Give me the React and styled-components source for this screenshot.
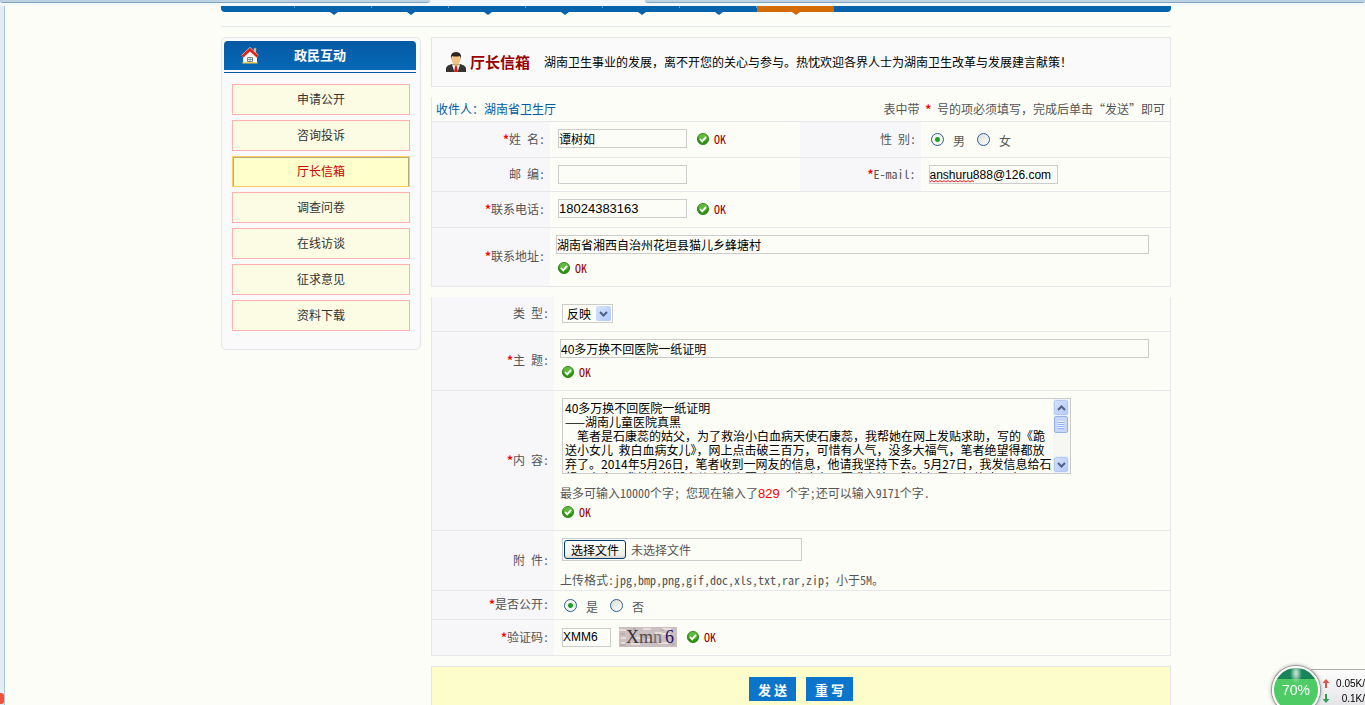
import React, { useRef, useState } from 'react';
import styled, { createGlobalStyle } from 'styled-components';

const menu = [
	'申请公开',
	'咨询投诉',
	'厅长信箱',
	'调查问卷',
	'在线访谈',
	'征求意见',
	'资料下载',
];

const navItems = [
	{ id: 'home', first: true },
	{ id: 'news', arrow: true },
	{ id: 'open', arrow: true },
	{ id: 'service', arrow: true },
	{ id: 'health', arrow: true },
	{ id: 'policy', arrow: true },
	{ id: 'special', arrow: true },
	{ id: 'mailbox', arrow: true, current: true },
];

const letter = [
	'40多万换不回医院一纸证明',
	'——湖南儿童医院真黑',
	'　笔者是石康蕊的姑父，为了救治小白血病天使石康蕊，我帮她在网上发贴求助，写的《跪',
	'送小女儿  救白血病女儿》，网上点击破三百万，可惜有人气，没多大福气，笔者绝望得都放',
	'弃了。2014年5月26日，笔者收到一网友的信息，他请我坚持下去。5月27日，我发信息给石',
	'超已有多，我转告他湖南儿童的主要陪同医生也在，要求主治医院的领导回复他才同意',
].join('\n');

const HouseIcon = () => (
	<svg width='18' height='18' viewBox='0 0 18 18' aria-hidden='true'>
		<path d='M13 1h2v5h-2z' fill='#e8e0d8' stroke='#8a6a5a' strokeWidth='.6' />
		<path d='M2 9l7-6 7 6v7H2z' fill='#fff' />
		<path d='M1.500 15h15v1.500h-15z' fill='#f5cf5a' />
		<path d='M6.500 10.500h5v4h-5z' fill='#eef4fb' stroke='#68788c' strokeWidth='.9' />
		<path d='M9 10.500v4M6.500 12.500h5' stroke='#68788c' strokeWidth='.7' />
		<path d='M1.500 9.500L9 2.500l7.500 7' fill='none' stroke='#f6c9c0' strokeWidth='3.600' />
		<path d='M1.500 9.500L9 2.500l7.500 7' fill='none' stroke='#dd1f14' strokeWidth='2.400' />
	</svg>
);

const PersonIcon = () => (
	<svg width='20' height='21' viewBox='0 0 20 21' aria-hidden='true'>
		<path d='M0 20v-4q1-3 6-4h8q5 1 6 4v4z' fill='#333' />
		<path d='M6 12.500L8.500 20h3L14 12.500z' fill='#fff' />
		<path d='M9 14h2l1 6H8z' fill='#d3201c' />
		<path d='M7.500 10h5v3L10 14.500 7.500 13z' fill='#d99a55' />
		<ellipse cx='10' cy='7' rx='4.500' ry='5.500' fill='#f2c084' />
		<path d='M5 7Q4 0 10 0t5 7l-1-3q-4 1-8 0z' fill='#2c221b' />
	</svg>
);

const OkIcon = () => (
	<svg width='12' height='12' viewBox='0 0 12 12' aria-hidden='true'>
		<circle cx='6' cy='6' r='5.600' fill='#2f9412' stroke='#24790e' strokeWidth='.8' />
		<ellipse cx='6' cy='4.500' rx='4.500' ry='3.500' fill='#62b93f' />
		<path d='M3 6l2.200 2.400L9 3.900' fill='none' stroke='#fff' strokeWidth='1.800' />
	</svg>
);

const Chevron = ({ up }) => (
	<svg width='9' height='6' viewBox='0 0 9 6' aria-hidden='true'>
		<path
			d={up ? 'M1 5l3.500-3.500L8 5' : 'M1 1l3.500 3.500L8 1'}
			fill='none'
			stroke='#4d6185'
			strokeWidth='2'
		/>
	</svg>
);

const Squiggle = () => (
	<SpellMark width='45' height='3' viewBox='0 0 45 3' aria-hidden='true'>
		<path
			d='M0 2l2-1.500 2 1.500 2-1.500 2 1.500 2-1.500 2 1.500 2-1.500 2 1.500 2-1.500 2 1.500 2-1.500 2 1.500 2-1.500 2 1.500 2-1.500 2 1.500 2-1.500 2 1.500 2-1.500 2 1.500 2-1.500 2 1.500'
			fill='none'
			stroke='#f00'
			strokeWidth='.9'
		/>
	</SpellMark>
);

const CaptchaImage = () => (
	<svg width='58' height='20' viewBox='0 0 58 20' role='img' aria-label='Xmn6'>
		<rect width='58' height='20' fill='#cbbfc2' />
		<path
			d='M0 3h7m5 14h9m3-15h8m4 4h7m-26 5h6m16 5h10m-47-5h5m36-9h9m-50 14h4m20-3h5m12-6h8'
			stroke='#e6dfd8'
			strokeWidth='2'
		/>
		<path
			d='M2 7h4m8-5h3m14 13h6m5-12h3m6 14h5M1 18h6m15-8h5m13 3h3'
			stroke='#a99ba6'
			strokeWidth='1'
		/>
		<text x='7' y='16' fontFamily='Liberation Serif, serif' fontSize='18' fill='#333'>
			X
			<tspan fill='#554a4a'>m</tspan>
			<tspan fill='#77706f'>n</tspan>
		</text>
		<text x='46' y='16' fontFamily='Liberation Serif, serif' fontSize='18' fill='#1b1464'>
			6
		</text>
	</svg>
);

const Ok = () => (
	<OkMark>
		<OkIcon />
		OK
	</OkMark>
);

const Caption = ({ text, required, htmlFor, second }) => (
	<LabelCell $second={second}>
		<label htmlFor={htmlFor}>
			{required && <Star>*</Star>}
			{text}:
		</label>
	</LabelCell>
);

const App = () => {
	const fileRef = useRef(null);
	const [fileName, setFileName] = useState('未选择文件');

	return (
		<Shell>
			<GlobalStyle />
			<TabStrip>
				<BrowserTab $w='430px' />
				<BrowserTab $w='215px' $active />
				<BrowserTab />
			</TabStrip>
			<Frame>
				<LeftEdge>
					<EdgeMark />
				</LeftEdge>
				<Page>
					<Container>
						<Nav>
							{navItems.map((item) => (
								<NavItem
									key={item.id}
									$first={item.first}
									$arrow={item.arrow}
									$current={item.current}
								/>
							))}
						</Nav>
						<Divider />
						<Columns>
							<Sidebar>
								<SideTitle>
									<HouseIcon />
									<h2>政民互动</h2>
								</SideTitle>
								<SideMenu>
									{menu.map((name) => (
										<SideLink
											key={name}
											href='#'
											$current={name === '厅长信箱'}>
											{name}
										</SideLink>
									))}
								</SideMenu>
							</Sidebar>

							<Main>
								<TitleBox>
									<PersonIcon />
									<h1>厅长信箱</h1>
									<p>
										湖南卫生事业的发展，离不开您的关心与参与。热忱欢迎各界人士为湖南卫生改革与发展建言献策！
									</p>
								</TitleBox>

								<FormTable>
									<Recipient>
										<span>收件人：湖南省卫生厅</span>
										<Hint>
											表中带 <Star>*</Star> 号的项必须填写，完成后单击“发送”即可
										</Hint>
									</Recipient>
									<Row $h='36px'>
										<Caption text='姓 名' required htmlFor='name' />
										<Cell>
											<TextInput id='name' defaultValue='谭树如' />
											<Ok />
										</Cell>
										<Caption text='性 别' htmlFor='male' second />
										<RadioCell>
											<Radio id='male' name='sex' defaultChecked />
											<label htmlFor='male'>男</label>
											<Radio id='female' name='sex' />
											<label htmlFor='female'>女</label>
										</RadioCell>
									</Row>
									<Row $h='34px'>
										<Caption text='邮 编' htmlFor='zip' />
										<Cell>
											<TextInput id='zip' />
										</Cell>
										<Caption text='E-mail' required htmlFor='email' second />
										<Cell>
											<InputWrap>
												<TextInput id='email' defaultValue='anshuru888@126.com' />
												<Squiggle />
											</InputWrap>
										</Cell>
									</Row>
									<Row $h='36px'>
										<Caption text='联系电话' required htmlFor='phone' />
										<Cell>
											<TextInput id='phone' $size='13px' defaultValue='18024383163' />
											<Ok />
										</Cell>
									</Row>
									<Row $h='59px'>
										<Caption text='联系地址' required htmlFor='address' />
										<StackCell>
											<TextInput
												id='address'
												$wide
												defaultValue='湖南省湘西自治州花垣县猫儿乡蜂塘村'
											/>
											<Ok />
										</StackCell>
									</Row>
								</FormTable>

								<FormTable $wideLabel>
									<Row $h='35px'>
										<Caption text='类 型' htmlFor='kind' />
										<Cell>
											<SelectBox>
												<select id='kind' defaultValue='反映'>
													<option>反映</option>
												</select>
												<SelectArrow>
													<Chevron />
												</SelectArrow>
											</SelectBox>
										</Cell>
									</Row>
									<Row $h='59px'>
										<Caption text='主 题' required htmlFor='subject' />
										<StackCell>
											<TextInput
												id='subject'
												$wide
												defaultValue='40多万换不回医院一纸证明'
											/>
											<Ok />
										</StackCell>
									</Row>
									<Row $h='140px'>
										<Caption text='内 容' required htmlFor='content' />
										<StackCell>
											<TextFrame>
												<textarea id='content' wrap='off' defaultValue={letter} />
												<ScrollBar>
													<ScrollButton type='button' aria-label='向上'>
														<Chevron up />
													</ScrollButton>
													<ScrollThumb />
													<ScrollButton type='button' aria-label='向下'>
														<Chevron />
													</ScrollButton>
												</ScrollBar>
											</TextFrame>
											<Note>
												最多可输入10000个字; 您现在输入了<Count>829</Count> 个字;还可以输入9171个字.
											</Note>
											<Ok />
										</StackCell>
									</Row>
									<Row $h='60px'>
										<Caption text='附 件' htmlFor='file' />
										<StackCell>
											<FileBox>
												<input
													id='file'
													type='file'
													ref={fileRef}
													onChange={(e) =>
														setFileName(e.target.files[0]?.name || '未选择文件')
													}
												/>
												<button type='button' onClick={() => fileRef.current.click()}>
													选择文件
												</button>
												<span>{fileName}</span>
											</FileBox>
											<Note>
												上传格式:jpg,bmp,png,gif,doc,xls,txt,rar,zip；小于5M。
											</Note>
										</StackCell>
									</Row>
									<Row $h='29px'>
										<Caption text='是否公开' required htmlFor='yes' />
										<RadioCell>
											<Radio id='yes' name='public' defaultChecked />
											<label htmlFor='yes'>是</label>
											<Radio id='no' name='public' />
											<label htmlFor='no'>否</label>
										</RadioCell>
									</Row>
									<Row $h='36px'>
										<Caption text='验证码' required htmlFor='code' />
										<Cell>
											<CodeInput id='code' defaultValue='XMM6' />
											<CaptchaImage />
											<Ok />
										</Cell>
									</Row>
								</FormTable>

								<Actions>
									<ActionButton type='button'>发 送</ActionButton>
									<ActionButton type='button'>重 写</ActionButton>
								</Actions>
							</Main>
						</Columns>
					</Container>
				</Page>
			</Frame>
			<SpeedWidget>
				<SpeedBall>70%</SpeedBall>
				<SpeedPanel>
					<span>
						<svg width='8' height='9' viewBox='0 0 8 9' aria-hidden='true'>
							<path d='M4 0l3.500 4H5v5H3V4H.5z' fill='#e2533f' />
						</svg>
						0.05K/
					</span>
					<span>
						<svg width='8' height='9' viewBox='0 0 8 9' aria-hidden='true'>
							<path d='M4 9l3.500-4H5V0H3v5H.5z' fill='#2f9e57' />
						</svg>
						0.1K/
					</span>
				</SpeedPanel>
			</SpeedWidget>
		</Shell>
	);
};

const GlobalStyle = createGlobalStyle`
	* {
		box-sizing: border-box;
	}

	body {
		margin: 0;
		background: #fcfdf7;
		color: #555;
		font-family: 'Noto Sans CJK SC', sans-serif;
		font-size: 12px;
		line-height: 18px;
		font-feature-settings: 'hwid';
	}

	h1, h2, p {
		margin: 0;
	}

	svg {
		display: block;
		flex: none;
	}
`;

const Shell = styled.div`
	display: flex;
	flex-direction: column;
	height: 100vh;
	overflow: hidden;
`;

const TabStrip = styled.div`
	display: flex;
	flex: none;
	height: 6px;
	border-bottom: 3px solid #f3f8fb;
	background: #f3f8fb;
`;

const BrowserTab = styled.div`
	flex: ${(p) => (p.$w ? `0 0 ${p.$w}` : 1)};
	border-bottom: ${(p) => (p.$active ? 'none' : '1px solid #7fa5c5')};
	border-radius: 0 0 4px 4px;
	background: ${(p) => (p.$active ? '#f1f6fa' : '#bdd3e4')};
`;

const Frame = styled.div`
	display: flex;
	flex: 1;
	min-height: 0;
`;

const LeftEdge = styled.div`
	display: flex;
	flex: none;
	align-items: flex-end;
	width: 5px;
	padding-bottom: 1px;
	border-right: 1px solid #a9c6da;
	background: #e4edf3;
`;

const EdgeMark = styled.div`
	width: 4px;
	height: 11px;
	border-radius: 0 3px 3px 0;
	background: #f4503c;
`;

const Page = styled.div`
	flex: 1;
	padding-left: 22px;
`;

const Container = styled.div`
	max-width: 950px;
	margin: 0 auto;
`;

const Nav = styled.nav`
	display: flex;
	height: 6px;
	border-radius: 0 0 4px 4px;
	background: #0563ac;
`;

const NavItem = styled.div`
	position: relative;
	width: ${(p) => (p.$first ? '74px' : '77px')};
	background: ${(p) =>
		p.$current
			? '#d46b05'
			: 'linear-gradient(#5fa3d6, #5fa3d6) right top / 1px 2px no-repeat'};

	&::after {
		content: '';
		display: ${(p) => (p.$arrow ? 'block' : 'none')};
		position: absolute;
		top: 100%;
		left: 35px;
		border: 4px solid transparent;
		border-top: 3px solid ${(p) => (p.$current ? '#d46b05' : '#0563ac')};
		border-bottom: 0;
	}
`;

const Divider = styled.div`
	margin-top: 14px;
	border-bottom: 1px solid #dfe9ee;
`;

const Columns = styled.div`
	display: flex;
	align-items: flex-start;
	gap: 10px;
	margin-top: 10px;
`;

const Sidebar = styled.aside`
	flex: none;
	width: 200px;
	padding: 3px 4px 18px 2px;
	border: 1px solid #e3e5ea;
	border-radius: 5px;
	background: #fafafb;
`;

const SideTitle = styled.div`
	position: relative;
	display: flex;
	align-items: center;
	justify-content: center;
	height: 29px;
	border-radius: 4px 4px 0 0;
	background: linear-gradient(#0559a3, #0669b6);

	svg {
		position: absolute;
		left: 17px;
	}

	h2 {
		color: #fff;
		font-size: 13px;
		line-height: 16px;
		padding-bottom: 2px;
	}
`;

const SideMenu = styled.nav`
	display: flex;
	flex-direction: column;
	gap: 5px;
	margin-top: 2px;
	padding: 11px 6px 0 8px;
	border-top: 1px solid #0559a3;
`;

const SideLink = styled.a`
	height: 31px;
	border: 1px solid ${(p) => (p.$current ? '#fc6' : '#ffb0b0')};
	background: ${(p) => (p.$current ? '#ffffcb' : '#fcfbe4')};
	box-shadow: ${(p) =>
		p.$current ? 'inset 1px 1px #b5ae85, inset -1px 0 #b5ae85' : 'none'};
	color: ${(p) => (p.$current ? '#c00' : '#333')};
	line-height: 27px;
	text-align: center;
	text-decoration: none;
`;

const Main = styled.main`
	display: flex;
	flex: 1;
	flex-direction: column;
	gap: 10px;
	min-width: 0;
`;

const TitleBox = styled.header`
	display: flex;
	align-items: center;
	height: 50px;
	padding-left: 14px;
	border: 1px solid #e5e5e9;
	background: #fafafa;

	h1 {
		margin: 0 14px 0 4px;
		color: #900;
		font-size: 15px;
	}

	p {
		color: #000;
		font-feature-settings: normal;
	}
`;

const FormTable = styled.section`
	--label: ${(p) => (p.$wideLabel ? '122px' : '118px')};
	border: solid #e3e9ee;
	border-width: 0 1px;
`;

const Recipient = styled.div`
	display: flex;
	justify-content: space-between;
	height: 25px;
	padding: 0 5px 0 4px;
	border-bottom: 1px solid #e8e8ec;
	color: #0059a3;
	font-feature-settings: normal;
	line-height: 24px;
`;

const Star = styled.span`
	color: #f00;
	font-weight: bold;
`;

const Hint = styled.span`
	color: #555;

	${Star} {
		margin: 0 3px;
	}
`;

const Row = styled.div`
	display: flex;
	height: ${(p) => p.$h};
	border-bottom: 1px solid #e8e8ec;
`;

const LabelCell = styled.div`
	display: flex;
	flex: none;
	align-items: center;
	justify-content: flex-end;
	width: ${(p) => (p.$second ? '121px' : 'var(--label)')};
	padding: 0 5px 2px 0;
	background: #f7f7fa;
`;

const Cell = styled.div`
	display: flex;
	flex: 1;
	align-items: center;
	align-self: flex-start;
	gap: 8px;
	padding: 7px 0 0 8px;
`;

const StackCell = styled.div`
	display: flex;
	flex: 1;
	flex-direction: column;
	align-items: flex-start;
	padding: 7px 21px 0 6px;

	> span {
		margin: 5px 0 0 2px;
	}

	> p + span {
		margin-top: 1px;
	}
`;

const RadioCell = styled.div`
	display: flex;
	flex: 0 0 249px;
	align-items: center;
	padding-left: 10px;

	label {
		margin: 3px 12px 0 9px;
	}
`;

const Radio = styled.input.attrs({ type: 'radio' })`
	appearance: none;
	width: 13px;
	height: 13px;
	margin: 0;
	border: 1px solid #2b5f94;
	border-radius: 50%;
	background: linear-gradient(135deg, #dcdcd6, #fff);

	&:checked {
		background: radial-gradient(circle, #21a121 0 2px, #f4f6f2 3px);
	}
`;

const OkMark = styled.span`
	display: flex;
	align-items: center;
	gap: 5px;
	margin-left: 2px;
	color: #900;
`;

const TextInput = styled.input`
	width: ${(p) => (p.$wide ? '100%' : '129px')};
	height: 19px;
	padding: 0;
	border: 1px solid #ccc;
	background: transparent;
	color: #000;
	font-family: 'Liberation Sans', 'Noto Sans CJK SC', sans-serif;
	font-size: ${(p) => p.$size || '12px'};
`;

const CodeInput = styled(TextInput)`
	width: 49px;
`;

const InputWrap = styled.div`
	position: relative;
	display: flex;
`;

const SpellMark = styled.svg`
	position: absolute;
	bottom: 1px;
	left: 1px;
`;

const SelectBox = styled.div`
	position: relative;
	display: flex;

	select {
		appearance: none;
		width: 51px;
		height: 19px;
		padding: 0 0 0 4px;
		border: 1px solid #ccc;
		border-radius: 0;
		background: transparent;
		color: #000;
		font-family: inherit;
		font-size: 12px;
		line-height: 17px;
	}
`;

const SelectArrow = styled.span`
	position: absolute;
	top: 2px;
	right: 2px;
	display: grid;
	place-items: center;
	width: 15px;
	height: 15px;
	border-radius: 2px;
	background: linear-gradient(135deg, #d5e2fd, #b2c9f8);
	pointer-events: none;
`;

const TextFrame = styled.div`
	display: flex;
	width: 509px;
	height: 76px;
	margin-left: 2px;
	border: 1px solid #ccc;

	textarea {
		flex: 1;
		min-width: 0;
		height: 74px;
		padding: 2px 0 0 2px;
		border: 0;
		outline: 0;
		background: transparent;
		color: #000;
		font-family: 'Noto Sans CJK SC', sans-serif;
		font-size: 12px;
		line-height: 14px;
		overflow: hidden;
		resize: none;
	}
`;

const ScrollBar = styled.div`
	display: flex;
	flex: none;
	flex-direction: column;
	width: 17px;
	background: #f6f6f2;
`;

const ScrollButton = styled.button`
	display: grid;
	place-items: center;
	width: 16px;
	height: 17px;
	padding: 0;
	border: 1px solid #e8f0ff;
	border-radius: 3px;
	background: linear-gradient(135deg, #d5e2fd, #b2c9f8);
	box-shadow: inset 0 0 0 1px #b4c8f0;
`;

const ScrollThumb = styled.div`
	width: 14px;
	height: 17px;
	margin: 0 1px auto;
	border: 1px solid #98b1e4;
	border-radius: 2px;
	background:
		repeating-linear-gradient(#eef4fe 0 1px, #8cb0f8 1px 2px) center / 6px 8px no-repeat,
		#c6d6fb;
`;

const Note = styled.p`
	margin-top: 10px;
	line-height: 18px;
`;

const Count = styled.span`
	color: #f00;
	font-family: 'Liberation Sans', sans-serif;
	font-size: 13px;
	line-height: 16px;
`;

const FileBox = styled.div`
	display: flex;
	align-items: center;
	gap: 5px;
	width: 240px;
	height: 23px;
	margin-left: 2px;
	padding-left: 1px;
	border: 1px solid #ccc;

	input {
		display: none;
	}

	button {
		width: 62px;
		height: 19px;
		padding: 0;
		border: 1px solid #003c74;
		border-radius: 3px;
		background: linear-gradient(#fff, #f0f0ea 80%, #d8d4c8);
		color: #000;
		font-family: inherit;
		font-size: 12px;
		line-height: 17px;
	}
`;

const Actions = styled.div`
	display: flex;
	justify-content: center;
	gap: 10px;
	height: 60px;
	padding-top: 10px;
	border: 1px solid #e5e5e5;
	background: #fdfdcc;
`;

const ActionButton = styled.button`
	width: 47px;
	height: 24px;
	padding: 0;
	border: 0;
	background: #0b75cb;
	color: #fff;
	font-family: inherit;
	font-size: 13px;
	font-weight: bold;
`;

const SpeedWidget = styled.div`
	position: fixed;
	right: 0;
	bottom: -9px;
	display: flex;
	align-items: center;
	color: #000;
	font-family: 'Liberation Sans', sans-serif;
	font-size: 10px;
	line-height: 15px;
`;

const SpeedBall = styled.div`
	z-index: 1;
	width: 48px;
	height: 48px;
	border: 2px solid #fff;
	border-radius: 50%;
	background:
		radial-gradient(ellipse at 50% 12%, #b9dccb 0 1px, transparent 6px),
		linear-gradient(#16855a 0 11px, #4fcb66 11px);
	box-shadow: 0 0 0 1px #999, 0 0 4px #777;
	color: #fff;
	font-size: 14px;
	line-height: 44px;
	text-align: center;
`;

const SpeedPanel = styled.div`
	display: flex;
	flex-direction: column;
	width: 54px;
	height: 43px;
	margin-left: -9px;
	padding: 6px 0 0 11px;
	border-top: 1px solid #aaa;
	background: linear-gradient(#fdfdfd, #e0e0e4);

	span {
		display: flex;
		align-items: center;
		justify-content: space-between;
	}
`;

export default App;
